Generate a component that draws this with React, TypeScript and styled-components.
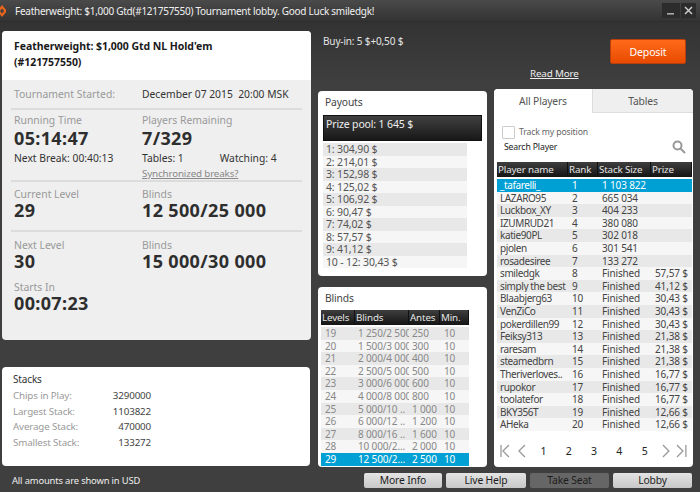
import React from 'react';
import styled, { createGlobalStyle } from 'styled-components';

const Global = createGlobalStyle`
  html, body { margin: 0; padding: 0; }
  body { width: 700px; height: 492px; overflow: hidden; background: #3f3f3f; font-family: "Noto Sans", "DejaVu Sans", sans-serif; font-size: 10px; letter-spacing: -0.15px; color: #333; }
`;

const Page = styled.div`
  width: 700px; height: 492px; display: flex; flex-direction: column;
  background: linear-gradient(#323232 22px, #333 23px, #3e3e3e 81px, #3f3f3f 81px);
`;
const TitleBar = styled.div`
  height: 22px; flex: none; box-sizing: border-box; display: flex; align-items: center; padding: 0 4px 0 0; gap: 1px;
  background: linear-gradient(#4a4a4a, #333); border-bottom: 1px solid #2e2e2e;
`;
const TitleText = styled.div`color: #f0f0f0; font-size: 10px; letter-spacing: -0.27px; flex: 1; white-space: nowrap; display: flex; align-items: center; gap: 9px;`;
const WinBtn = styled.div<{ $w: number }>`
  width: ${p => p.$w}px; height: 15px; background: #2c2c2c; display: flex; align-items: center; justify-content: center;
`;
const Columns = styled.div`display: flex; padding: 0 7px 0 2px; gap: 7px; height: 445px; flex: none;`;
const LeftCol = styled.div`width: 309px; display: flex; flex-direction: column; padding-top: 9px;`;
const MidCol = styled.div`width: 169px; display: flex; flex-direction: column;`;
const RightCol = styled.div`width: 199px; display: flex; flex-direction: column;`;

const MainCard = styled.div`height: 309px; flex: none; border-radius: 4px; overflow: hidden; background: #efefef; display: flex; flex-direction: column;`;
const CardTitle = styled.div`
  height: 49px; box-sizing: border-box; background: #fff; padding: 7px 12px; font-weight: 700; font-size: 10.5px; line-height: 16px; color: #1a1a1a; letter-spacing: -0.05px;
`;
const Section = styled.div<{ $h: number }>`
  height: ${p => p.$h}px; box-sizing: border-box; margin: 0 9px; padding: 0 3px; border-bottom: 2px solid #dcdcdc;
  &:last-child { border-bottom: none; }
`;
const Two = styled.div<{ $top: number }>`display: grid; grid-template-columns: 128px 1fr; padding-top: ${p => p.$top}px;`;
const Label = styled.div`color: #999; font-size: 10.4px; line-height: 14px; letter-spacing: 0;`;
const DarkLabel = styled.div`color: #333; font-size: 10.3px; line-height: 14px; letter-spacing: 0; white-space: pre;`;
const Big = styled.div<{ $tight?: boolean }>`color: #2e2e2e; font-weight: 700; font-size: 18px; line-height: ${p => p.$tight ? 19 : 22}px; letter-spacing: 0.35px;`;
const Inline = styled.div`display: flex; gap: 36px; margin-top: 2px;`;
const NextBreak = styled(DarkLabel)`margin-top: 2px;`;
const Sync = styled.a`color: #888; text-decoration: underline; font-size: 9.8px; line-height: 14px; display: block; margin-top: 2px;`;
const StartsIn = styled.div`padding-top: 9px;`;

const Stacks = styled.div`margin-top: 27px; height: 99px; flex: none; background: #fff; border-radius: 4px; padding: 5px 11px; box-sizing: border-box; width: 308px;`;
const StackTitle = styled.div`color: #333; font-size: 10px; line-height: 14px; margin-bottom: 2px;`;
const StackRow = styled.div`display: flex; justify-content: space-between; width: 138px; line-height: 15.5px; height: 15.5px; font-size: 9.8px; color: #999; & > b { font-weight: 400; color: #444; }`;

const BuyIn = styled.div`height: 69px; flex: none; box-sizing: border-box; padding: 13px 5px 0; color: #e4e4e4; font-size: 10px; line-height: 12px; `;
const Panel = styled.div<{ $h: number; $top?: number }>`height: ${p => p.$h}px; flex: none; margin-top: ${p => p.$top ?? 0}px; background: #fff; border-radius: 4px; box-sizing: border-box; overflow: hidden;`;
const PanelTitle = styled.div`color: #444; padding: 4px 7px 0; font-size: 10.3px; line-height: 14px;`;
const Pool = styled.div`margin: 6px 5px 2px; height: 26px; box-sizing: border-box; background: linear-gradient(#404040, #181818); color: #eee; padding: 1px 2px; font-size: 10.5px; line-height: 14px; border: 1px solid #111;`;
const PayRow = styled.div<{ $odd: boolean }>`margin-left: 5px; width: 144px; height: 12.55px; padding-left: 3px; box-sizing: border-box; background: ${p => p.$odd ? '#e8e8e8' : '#f6f6f6'}; color: #555; font-size: 10.5px; line-height: 12.5px;`;

const THead = styled.div<{ $cols: string }>`
  display: grid; grid-template-columns: ${p => p.$cols}; height: 15px; background: #111;
`;
const Th = styled.div`
  background: linear-gradient(#3e3e3e, #151515); color: #e4e4e4; font-size: 9.8px; line-height: 15px; padding-left: 1px; margin-right: 1px; overflow: hidden; white-space: nowrap;
`;
const BlindTable = styled.div`margin: 5px 0 0 3px; width: 148px;`;
const Row = styled.div<{ $cols: string; $bg: string; $color: string }>`
  display: grid; grid-template-columns: ${p => p.$cols}; height: 12.6px; background: ${p => p.$bg}; color: ${p => p.$color}; font-size: 10px; line-height: 12.5px; white-space: nowrap;
`;
const Cell = styled.div<{ $pl?: number }>`padding-left: ${p => p.$pl ?? 4}px; overflow: hidden;`;
const NameCell = styled(Cell)`letter-spacing: -0.4px;`;
const TableBody = styled.div`margin-top: 2px;`;

const DepositWrap = styled.div`height: 67px; flex: none; box-sizing: border-box; padding-top: 17px; position: relative;`;
const ReadMore = styled.a`position: absolute; left: 36px; top: 46px; color: #eee; text-decoration: underline; font-size: 9.8px; line-height: 12px;`;
const Deposit = styled.div`
  margin-left: 116px; width: 76px; height: 25px; border-radius: 2px; background: linear-gradient(#ff6a1a, #e84b00); border: 1px solid #b8400c; box-sizing: border-box;
  color: #fff; display: flex; align-items: center; justify-content: center; font-size: 10.5px;
`;
const Tabs = styled.div`display: flex; height: 24px;`;
const Tab = styled.div<{ $active?: boolean }>`
  flex: ${p => p.$active ? '0 0 98px' : '1'}; text-align: center; line-height: 24px; font-size: 10.3px; color: #555; box-sizing: border-box;
  background: ${p => p.$active ? '#fff' : '#efefef'}; border-left: ${p => p.$active ? 'none' : '1px solid #ddd'}; border-bottom: ${p => p.$active ? 'none' : '1px solid #ddd'};
`;
const Track = styled.div`display: flex; align-items: center; gap: 4px; margin: 13px 0 0 8px; height: 12px; color: #666; font-size: 8.7px;`;
const Check = styled.div`width: 11px; height: 11px; border: 1px solid #ccc; background: #fff; border-radius: 1px;`;
const Search = styled.div`display: flex; justify-content: space-between; align-items: center; padding: 0 7px 0 10px; margin-top: 1px; height: 15px; font-size: 8.7px; color: #222; `;
const PlayerTable = styled.div`margin: 8px 0 0 3px; width: 195px;`;
const Pager = styled.div`display: flex; align-items: center; padding: 0 4px 0 5px; margin-top: 12px; height: 16px; color: #555;`;
const PageNum = styled.div`width: 25.5px; text-align: center; font-size: 10.5px; color: #222; `;
const Spacer = styled.div`flex: 1;`;

const BottomBar = styled.div`display: flex; justify-content: space-between; align-items: center; padding: 6px 8px 0 12px; height: 15px; flex: none;`;
const Footnote = styled.div`color: #eee; font-size: 9.4px; line-height: 12px;`;
const Buttons = styled.div`display: flex; gap: 4px;`;
const Btn = styled.div<{ $dark?: boolean; $w: number }>`
  width: ${p => p.$w}px; height: 15px; border-radius: 2px; box-sizing: border-box; text-align: center; font-size: 10.3px; line-height: 15px; color: #1c1c1c;
  background: ${p => p.$dark ? '#666' : 'linear-gradient(#e4e4e4, #c8c8c8)'};
`;

const Logo = () => (
  <svg width="6" height="12" viewBox="0 0 6 12">
    <path d="M2 0 L7 6 L2 12 L-3 6 Z M2 3.5 L0 6 L2 8.5 L4 6 Z" fill="#e8641b" fillRule="evenodd" />
  </svg>
);
const Chevron = ({ d }: { d: string }) => (
  <svg width="16" height="14" viewBox="0 0 16 14" fill="none" stroke="#999" strokeWidth="1.3"><path d={d} /></svg>
);

const payouts = ['1: 304,90 $','2: 214,01 $','3: 152,98 $','4: 125,02 $','5: 106,92 $','6: 90,47 $','7: 74,02 $','8: 57,57 $','9: 41,12 $','10 - 12: 30,43 $'];
const blinds = [
  ['19','1 250/2 500','250'],['20','1 500/3 000','300'],['21','2 000/4 000','400'],['22','2 500/5 000','500'],
  ['23','3 000/6 000','600'],['24','4 000/8 000','800'],['25','5 000/10 ..','1 000'],['26','6 000/12 ..','1 200'],
  ['27','8 000/16 ..','1 600'],['28','10 000/2...','2 000'],['29','12 500/2...','2 500'],
];
const players = [
  ['_tafarelli_','1','1 103 822',''],['LAZARO95','2','665 034',''],['Luckbox_XY','3','404 233',''],['IZUMRUD21','4','380 080',''],
  ['katie90PL','5','302 018',''],['pjolen','6','301 541',''],['rosadesiree','7','133 272',''],['smiledgk','8','Finished','57,57 $'],
  ['simply the best','9','Finished','41,12 $'],['Blaabjerg63','10','Finished','30,43 $'],['VenZiCo','11','Finished','30,43 $'],
  ['pokerdillen99','12','Finished','30,43 $'],['Feiksy313','13','Finished','21,38 $'],['raresam','14','Finished','21,38 $'],
  ['steamedbrn','15','Finished','21,38 $'],['Theriverloves..','16','Finished','16,77 $'],['rupokor','17','Finished','16,77 $'],
  ['toolatefor','18','Finished','16,77 $'],['BKY356T','19','Finished','12,66 $'],['AHeka','20','Finished','12,66 $'],
];
const blindCols = '34px 54px 31px 29px';
const playerCols = '71px 30px 53px 41px';
const stripe = (i: number) => (i % 2 === 0 ? '#e8e8e8' : '#f6f6f6');

export default function App() {
  return (
    <Page>
      <Global />
      <TitleBar>
        <TitleText><Logo />Featherweight: $1,000 Gtd(#121757550) Tournament lobby. Good Luck smiledgk!</TitleText>
        <WinBtn $w={18}><svg width="8" height="8" viewBox="0 0 8 8"><rect x="0" y="6" width="7" height="1.6" fill="#aaa" /></svg></WinBtn>
        <WinBtn $w={15}><svg width="9" height="9" viewBox="0 0 9 9" stroke="#ccc" strokeWidth="1.5"><path d="M1 1L8 8M8 1L1 8" /></svg></WinBtn>
      </TitleBar>
      <Columns>
        <LeftCol>
          <MainCard>
            <CardTitle>Featherweight: $1,000 Gtd NL Hold'em<br />(#121757550)</CardTitle>
            <Section $h={30}>
              <Two $top={7}><Label>Tournament Started:</Label><DarkLabel>December 07 2015  20:00 MSK</DarkLabel></Two>
            </Section>
            <Section $h={72}>
              <Two $top={3}>
                <div><Label>Running Time</Label><Big>05:14:47</Big><NextBreak>Next Break: 00:40:13</NextBreak></div>
                <div><Label>Players Remaining</Label><Big>7/329</Big>
                  <Inline><DarkLabel>Tables: 1</DarkLabel><DarkLabel>Watching: 4</DarkLabel></Inline>
                  <Sync>Synchronized breaks?</Sync>
                </div>
              </Two>
            </Section>
            <Section $h={50}>
              <Two $top={5}>
                <div><Label>Current Level</Label><Big $tight>29</Big></div>
                <div><Label>Blinds</Label><Big $tight>12 500/25 000</Big></div>
              </Two>
            </Section>
            <Section $h={108}>
              <Two $top={6}>
                <div><Label>Next Level</Label><Big $tight>30</Big></div>
                <div><Label>Blinds</Label><Big $tight>15 000/30 000</Big></div>
              </Two>
              <StartsIn><Label>Starts In</Label><Big $tight>00:07:23</Big></StartsIn>
            </Section>
          </MainCard>
          <Stacks>
            <StackTitle>Stacks</StackTitle>
            <StackRow><span>Chips in Play:</span><b>3290000</b></StackRow>
            <StackRow><span>Largest Stack:</span><b>1103822</b></StackRow>
            <StackRow><span>Average Stack:</span><b>470000</b></StackRow>
            <StackRow><span>Smallest Stack:</span><b>133272</b></StackRow>
          </Stacks>
        </LeftCol>
        <MidCol>
          <BuyIn>Buy-in: 5 $+0,50 $</BuyIn>
          <Panel $h={185}>
            <PanelTitle>Payouts</PanelTitle>
            <Pool>Prize pool: 1 645 $</Pool>
            {payouts.map((p, i) => <PayRow key={p} $odd={i % 2 === 0}>{p}</PayRow>)}
          </Panel>
          <Panel $h={180} $top={11}>
            <PanelTitle>Blinds</PanelTitle>
            <BlindTable>
              <THead $cols={blindCols}><Th>Levels</Th><Th>Blinds</Th><Th>Antes</Th><Th>Min.</Th></THead>
              <TableBody>
                {blinds.map((b, i) => {
                  const sel = i === 10;
                  return (
                    <Row key={b[0]} $cols={blindCols} $bg={sel ? '#009fd4' : stripe(i)} $color={sel ? '#fff' : '#888'}>
                      <Cell>{b[0]}</Cell><Cell $pl={3}>{b[1]}</Cell><Cell $pl={3}>{b[2]}</Cell><Cell>10</Cell>
                    </Row>
                  );
                })}
              </TableBody>
            </BlindTable>
          </Panel>
        </MidCol>
        <RightCol>
          <DepositWrap>
            <Deposit>Deposit</Deposit>
            <ReadMore>Read More</ReadMore>
          </DepositWrap>
          <Panel $h={378}>
            <Tabs><Tab $active>All Players</Tab><Tab>Tables</Tab></Tabs>
            <Track><Check />Track my position</Track>
            <Search>
              <span>Search Player</span>
              <svg width="14" height="14" viewBox="0 0 14 14" fill="none" stroke="#999" strokeWidth="2"><circle cx="5.5" cy="5.5" r="4" /><path d="M8.5 8.5L13 13" /></svg>
            </Search>
            <PlayerTable>
              <THead $cols={playerCols}><Th>Player name</Th><Th>Rank</Th><Th>Stack Size</Th><Th>Prize</Th></THead>
              <TableBody>
                {players.map((p, i) => {
                  const sel = i === 0;
                  return (
                    <Row key={p[0]} $cols={playerCols} $bg={sel ? '#009fd4' : stripe(i)} $color={sel ? '#fff' : '#444'}>
                      <NameCell $pl={3}>{p[0]}</NameCell><Cell>{p[1]}</Cell><Cell>{p[2]}</Cell><Cell>{p[3]}</Cell>
                    </Row>
                  );
                })}
              </TableBody>
            </PlayerTable>
            <Pager>
              <Chevron d="M2 1V13M10 1L4 7L10 13" />
              <Chevron d="M10 1L4 7L10 13" />
              <PageNum>1</PageNum><PageNum>2</PageNum><PageNum>3</PageNum><PageNum>4</PageNum><PageNum>5</PageNum>
              <Spacer />
              <Chevron d="M6 1L12 7L6 13" />
              <Chevron d="M4 1L10 7L4 13M13 1V13" />
            </Pager>
          </Panel>
        </RightCol>
      </Columns>
      <BottomBar>
        <Footnote>All amounts are shown in USD</Footnote>
        <Buttons>
          <Btn $w={78}>More Info</Btn><Btn $w={80}>Live Help</Btn><Btn $w={79} $dark>Take Seat</Btn><Btn $w={79}>Lobby</Btn>
        </Buttons>
      </BottomBar>
    </Page>
  );
}
